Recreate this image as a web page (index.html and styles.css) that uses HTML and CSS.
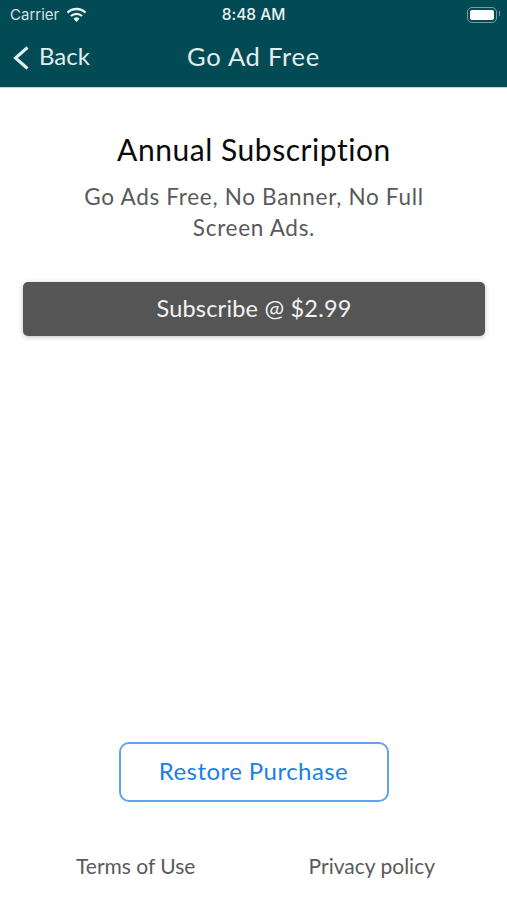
FILE: index.html
```html
<!DOCTYPE html>
<html lang="en">
<head>
    <meta charset="UTF-8">
    <meta name="viewport" content="width=device-width, initial-scale=1.0">
    <title>Go Ad Free</title>
    <link rel="stylesheet" href="styles.css">
</head>
<body>
    <div class="app">
        <div class="topbar">
            <div class="statusbar">
                <div class="status-left">
                    <span class="carrier">Carrier</span>
                    <svg class="wifi" width="21" height="16" viewBox="0 0 21 16">
                        <path d="M1.5 5.6a13 13 0 0 1 18 0" fill="none" stroke="#e8f0f1" stroke-width="2.3"/>
                        <path d="M4.9 9a8.2 8.2 0 0 1 11.2 0" fill="none" stroke="#e8f0f1" stroke-width="2.3"/>
                        <path d="M7.5 11.7l3 3.2 3-3.2a4.3 4.3 0 0 0-6 0z" fill="#e8f0f1"/>
                    </svg>
                </div>
                <span class="clock">8:48 AM</span>
                <div class="battery"><div class="battery-fill"></div></div>
            </div>
            <div class="navbar">
                <a class="back">
                    <svg class="chevron" width="18" height="26" viewBox="0 0 18 26">
                        <path d="M16.5 2.5L4.5 13l12 10.5" fill="none" stroke="#e4eef0" stroke-width="3"/>
                    </svg>
                    <span>Back</span>
                </a>
                <h1>Go Ad Free</h1>
            </div>
        </div>

        <div class="content">
            <h2>Annual Subscription</h2>
            <p class="subtitle">Go Ads Free, No Banner, No Full<br>Screen Ads.</p>
            <button class="subscribe">Subscribe @ $2.99</button>
        </div>

        <div class="bottom">
            <button class="restore">Restore Purchase</button>
            <div class="links">
                <a>Terms of Use</a>
                <a>Privacy policy</a>
            </div>
        </div>
    </div>
</body>
</html>
```

FILE: styles.css
```css
body {
    margin: 0;
    font-family: 'Lato', 'Noto Sans', Arial, sans-serif;
    font-variant-ligatures: none;
    background: white;
}
.app {
    display: flex;
    flex-direction: column;
    height: 900px;
    overflow: hidden;
}
.topbar {
    height: 87px;
    background-color: #024b54;
    color: #e4eef0;
    border-bottom: 1px solid #c4d6d8;
}
.statusbar {
    display: flex;
    justify-content: space-between;
    align-items: center;
    position: relative;
    height: 29px;
    padding: 0 10px 0 10px;
}
.status-left {
    display: flex;
    align-items: center;
    gap: 7px;
}
.carrier {
    font-family: 'Inter', Arial, sans-serif;
    font-size: 15px;
    color: #d5e2e4;
}
.clock {
    position: absolute;
    left: 0;
    right: 0;
    text-align: center;
    font-family: 'Inter', Arial, sans-serif;
    font-size: 15.5px;
    font-weight: 500;
    color: #edf3f4;
}
.battery {
    box-sizing: border-box;
    position: relative;
    width: 30px;
    height: 16px;
    padding: 2px;
    border: 1.5px solid #7d9da2;
    border-radius: 5px;
}
.battery::after {
    content: "";
    position: absolute;
    top: 3px;
    right: -4px;
    width: 1.5px;
    height: 5px;
    background-color: #7d9da2;
}
.battery-fill {
    height: 100%;
    background-color: white;
    border-radius: 2px;
}
.navbar {
    display: flex;
    align-items: center;
    position: relative;
    height: 55px;
    padding-left: 11px;
    padding-bottom: 2px;
    box-sizing: border-box;
}
.back {
    display: flex;
    align-items: center;
    gap: 10px;
    font-size: 24px;
}
.chevron {
    margin-top: 4px;
}
.navbar h1 {
    position: absolute;
    left: 0;
    right: 0;
    margin: 0;
    text-align: center;
    font-size: 25.5px;
    font-weight: 400;
    letter-spacing: 0.75px;
}
.content {
    display: flex;
    flex-direction: column;
    align-items: center;
    padding: 42px 22px 0 23px;
}
.content h2 {
    margin: 0;
    font-size: 30px;
    line-height: 38px;
    font-weight: 400;
    letter-spacing: 0.55px;
    color: #0a0a0a;
}
.subtitle {
    margin: 13px 0 0;
    text-align: center;
    font-size: 22.5px;
    line-height: 31px;
    letter-spacing: 0.7px;
    color: #58595b;
}
.subscribe {
    width: 100%;
    height: 54px;
    margin-top: 39px;
    padding-bottom: 4px;
    background-color: #555555;
    color: #f2f2f2;
    border: none;
    border-radius: 5px;
    box-shadow: 0 1px 5px rgba(0, 0, 0, 0.25);
    font-family: inherit;
    font-size: 23.5px;
    letter-spacing: 0.2px;
}
.bottom {
    display: flex;
    flex-direction: column;
    align-items: center;
    margin-top: auto;
    padding-bottom: 21px;
}
.restore {
    width: 270px;
    height: 60px;
    padding-bottom: 5px;
    background: white;
    color: #1a7fe8;
    border: 2px solid #5fa2ee;
    border-radius: 10px;
    font-family: inherit;
    font-size: 24px;
    letter-spacing: 0.45px;
}
.links {
    display: flex;
    justify-content: space-between;
    align-self: stretch;
    margin-top: 51px;
    padding: 0 72px 0 76px;
    font-size: 21px;
    line-height: 26px;
    color: #5a5a5a;
}
```
